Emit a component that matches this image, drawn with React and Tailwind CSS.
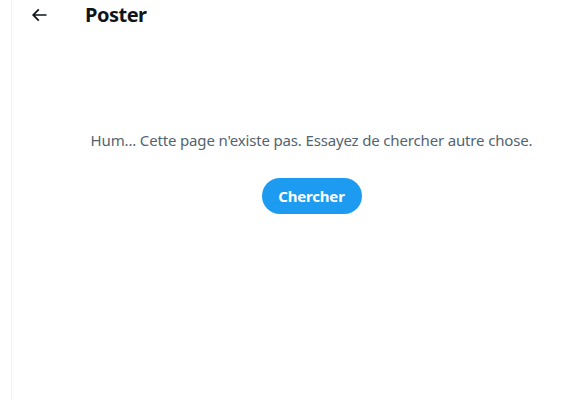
export default function App() {
  return (
    <div className="flex min-h-[400px] w-[585px] overflow-hidden bg-white" style={{ fontFamily: '"Noto Sans", "Liberation Sans", sans-serif' }}>
      <div className="w-[11px] shrink-0" />
      <div className="flex min-h-[400px] w-[600px] shrink-0 flex-col border-l border-[#eff3f4]">
        <div className="flex h-[30px] items-center">
          <div className="ml-[17px] flex h-[20px] w-[20px] items-center justify-center">
            <svg viewBox="0 0 24 24" className="h-[20px] w-[20px] fill-[#0f1419]">
              <path d="M7.414 13l5.043 5.04-1.414 1.42L3.586 12l7.457-7.46 1.414 1.42L7.414 11H21v2H7.414z" />
            </svg>
          </div>
          <div className="ml-[36px] text-[20px] font-bold leading-[24px] tracking-[-0.5px] text-[#0f1419]">Poster</div>
        </div>
        <div className="mt-[100px] flex flex-col items-center">
          <p className="text-[15px] leading-[20px] tracking-[-0.16px] text-[#536471]">Hum... Cette page n'existe pas. Essayez de chercher autre chose.</p>
          <button className="mt-[28px] flex h-[36px] w-[100px] items-center justify-center rounded-full bg-[#1d9bf0] text-[15px] font-bold tracking-[-0.2px] text-white">Chercher</button>
        </div>
      </div>
    </div>
  );
}
